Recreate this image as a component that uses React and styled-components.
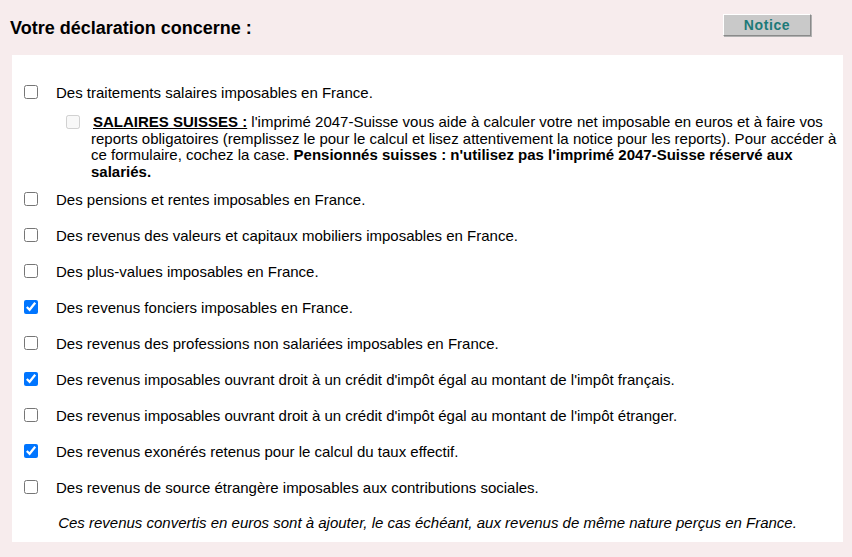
import React from 'react';
import styled, { createGlobalStyle } from 'styled-components';

const GlobalStyle = createGlobalStyle`
  body {
    margin: 0;
    background: #f7eced;
    font-family: "Liberation Sans", Arial, sans-serif;
    color: #000;
  }
`;

const Page = styled.div`
  width: 852px;
  height: 557px;
  background: #f7eced;
  overflow: hidden;
`;

const Header = styled.div`
  display: flex;
  align-items: center;
  justify-content: space-between;
  height: 55px;
  padding: 0 41px 0 10px;
  box-sizing: border-box;
`;

const Title = styled.h1`
  margin: 0;
  font-size: 18px;
  font-weight: bold;
  padding-top: 1px;
`;

const NoticeButton = styled.button`
  width: 88px;
  height: 22px;
  margin-top: -6px;
  background: #c9c9c9;
  border: 1px solid;
  border-color: #ffffff #8a8a8a #8a8a8a #ffffff;
  box-shadow: 1px 1px 0 #b0b0b0;
  color: #1d7a78;
  font-family: "Liberation Sans", Arial, sans-serif;
  font-weight: bold;
  font-size: 14px;
  letter-spacing: 0.6px;
  padding: 0;
`;

const Panel = styled.div`
  margin: 0 9px 0 12px;
  background: #fff;
  padding-top: 19px;
`;

const Row = styled.label`
  display: flex;
  align-items: center;
  height: 36px;
  padding-left: 12px;
  font-size: 15px;
`;

const Box = styled.input.attrs({ type: 'checkbox' })`
  width: 14px;
  height: 14px;
  margin: 0 18px 0 0;
  flex-shrink: 0;
`;

const Sub = styled.div`
  display: flex;
  align-items: flex-start;
  padding: 4px 2px 1px 54px;
  font-size: 15px;
  line-height: 16.6px;
`;

const SubBox = styled(Box)`
  margin: 1px 11px 0 0;
`;

const Strong = styled.b`
  text-decoration: ${(p) => (p.underline ? 'underline' : 'none')};
  margin-left: ${(p) => (p.underline ? '2px' : '0')};
`;

const Note = styled.p`
  margin: 0;
  padding: 9px 0 10px;
  text-align: center;
  font-style: italic;
  font-size: 15px;
  line-height: 18px;
`;

const rows = [
  { label: 'Des pensions et rentes imposables en France.' },
  { label: 'Des revenus des valeurs et capitaux mobiliers imposables en France.' },
  { label: 'Des plus-values imposables en France.' },
  { label: 'Des revenus fonciers imposables en France.', checked: true },
  { label: 'Des revenus des professions non salariées imposables en France.' },
  {
    label:
      "Des revenus imposables ouvrant droit à un crédit d'impôt égal au montant de l'impôt français.",
    checked: true,
  },
  {
    label:
      "Des revenus imposables ouvrant droit à un crédit d'impôt égal au montant de l'impôt étranger.",
  },
  { label: 'Des revenus exonérés retenus pour le calcul du taux effectif.', checked: true },
  { label: 'Des revenus de source étrangère imposables aux contributions sociales.' },
];

const App = () => (
  <Page>
    <GlobalStyle />
    <Header>
      <Title>Votre déclaration concerne :</Title>
      <NoticeButton type="button">Notice</NoticeButton>
    </Header>
    <Panel>
      <Row>
        <Box />
        Des traitements salaires imposables en France.
      </Row>
      <Sub>
        <SubBox disabled />
        <div>
          <Strong underline>SALAIRES SUISSES :</Strong> l'imprimé 2047-Suisse vous aide à
          calculer votre net imposable en euros et à faire vos reports obligatoires
          (remplissez le pour le calcul et lisez attentivement la notice pour les reports).
          Pour accéder à ce formulaire, cochez la case.{' '}
          <Strong>
            Pensionnés suisses : n'utilisez pas l'imprimé 2047-Suisse réservé aux salariés.
          </Strong>
        </div>
      </Sub>
      {rows.map((row) => (
        <Row key={row.label}>
          <Box defaultChecked={row.checked} />
          {row.label}
        </Row>
      ))}
      <Note>
        Ces revenus convertis en euros sont à ajouter, le cas échéant, aux revenus de même
        nature perçus en France.
      </Note>
    </Panel>
  </Page>
);

export default App;
